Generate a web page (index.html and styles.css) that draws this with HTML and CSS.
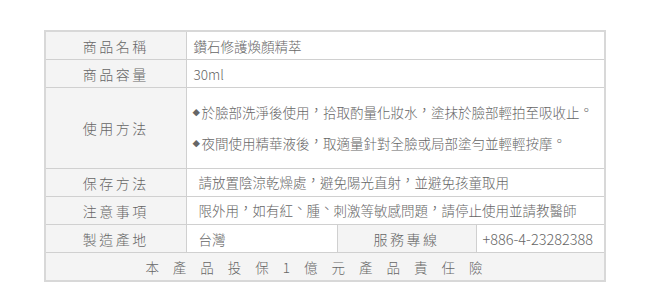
FILE: index.html
```html
<!DOCTYPE html>
<html lang="zh-TW">
<head>
<meta charset="utf-8">
<link rel="stylesheet" href="styles.css">
</head>
<body>
<div class="wrap">
<table class="spec">
  <colgroup>
    <col class="c1"><col class="c2"><col class="c3"><col class="c4">
  </colgroup>
  <tr>
    <th>商品名稱</th>
    <td colspan="3" class="v1">鑽石修護煥顏精萃</td>
  </tr>
  <tr>
    <th>商品容量</th>
    <td colspan="3" class="v1">30ml</td>
  </tr>
  <tr class="tall">
    <th>使用方法</th>
    <td colspan="3" class="v2">
      <p><span class="dia">◆</span>於臉部洗淨後使用<span class="pn">，</span>拾取酌量化妝水<span class="pn">，</span>塗抹於臉部輕拍至吸收止<span class="pn">。</span></p>
      <p><span class="dia">◆</span>夜間使用精華液後<span class="pn">，</span>取適量針對全臉或局部塗勻並輕輕按摩<span class="pn">。</span></p>
    </td>
  </tr>
  <tr>
    <th>保存方法</th>
    <td colspan="3" class="v3">請放置陰涼乾燥處<span class="pn">，</span>避免陽光直射<span class="pn">，</span>並避免孩童取用</td>
  </tr>
  <tr>
    <th>注意事項</th>
    <td colspan="3" class="v3">限外用<span class="pn">，</span>如有紅<span class="pn">、</span>腫<span class="pn">、</span>刺激等敏感問題<span class="pn">，</span>請停止使用並請教醫師</td>
  </tr>
  <tr>
    <th>製造產地</th>
    <td class="v3">台灣</td>
    <th class="sub">服務專線</th>
    <td class="phone">+886-4-23282388</td>
  </tr>
  <tr>
    <td colspan="4" class="foot">本產品投保1億元產品責任險</td>
  </tr>
</table>
</div>
</body>
</html>
```

FILE: styles.css
```css
html, body {
  margin: 0;
  padding: 0;
  background: #fff;
}
.wrap {
  padding: 30px 0 0 44px;
}
.spec {
  width: 562px;
  table-layout: fixed;
  border-collapse: collapse;
  border: 2px solid #d8d8d8;
  font-family: "Noto Sans CJK TC", "Noto Sans", sans-serif;
  font-weight: 300;
  color: #666;
}
.c1 { width: 141px; }
.c2 { width: 151px; }
.c3 { width: 139px; }
.c4 { width: auto; }
.spec th, .spec td {
  border: 1px solid #d0d0d0;
  height: 27px;
  padding: 0;
  vertical-align: middle;
  line-height: 18px;
}
.spec th {
  background: #f4f4f4;
  font-weight: 300;
  font-size: 14px;
  letter-spacing: 2.5px;
  text-align: center;
  color: #666;
}
.spec td {
  background: #fff;
  font-size: 13.5px;
  text-align: left;
}
.spec td.v1 { padding-left: 7px; }
.spec td.v3 { padding-left: 12px; }
.spec td.v2 {
  padding: 9px 0 9px 6px;
  height: 61px;
}
.v2 p {
  margin: 0;
  line-height: 31px;
}
.dia {
  display: inline-block;
  width: 9px;
  font-size: 7.5px;
  vertical-align: 2px;
}
.pn {
  display: inline-block;
  width: 1em;
  text-align: center;
  line-height: 1;
  vertical-align: 0.25em;
  font-feature-settings: "halt" 1;
}
.spec td.phone {
  padding-left: 6px;
  font-size: 14.5px;
}
.spec td.foot {
  background: #f4f4f4;
  text-align: center;
  letter-spacing: 14px;
  padding-left: 0;
  padding-right: 8px;
  color: #666;
}
```
